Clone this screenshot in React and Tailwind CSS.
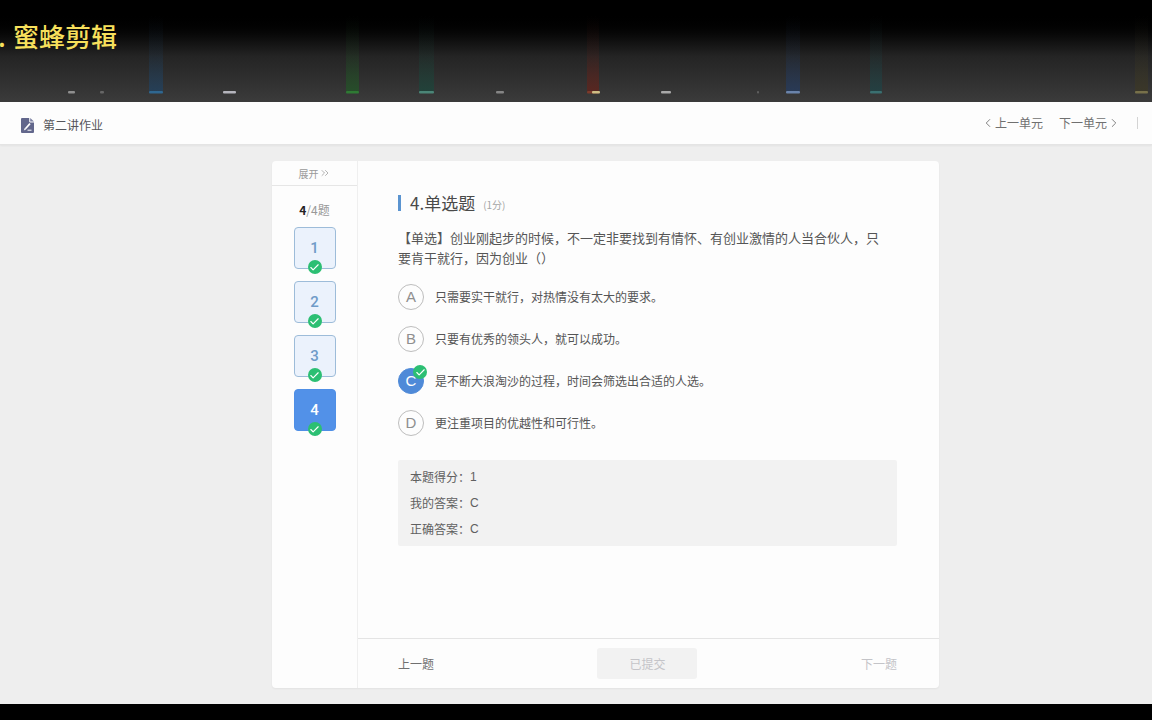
import { Check, ChevronLeft, ChevronRight, ChevronsRight } from 'lucide-react'

const questions = [1, 2, 3, 4]
const current = 4

const options = [
  { key: 'A', text: '只需要实干就行，对热情没有太大的要求。' },
  { key: 'B', text: '只要有优秀的领头人，就可以成功。' },
  { key: 'C', text: '是不断大浪淘沙的过程，时间会筛选出合适的人选。' },
  { key: 'D', text: '更注重项目的优越性和可行性。' },
]

const results = [
  { label: '本题得分：', value: '1' },
  { label: '我的答案：', value: 'C' },
  { label: '正确答案：', value: 'C' },
]

// icon edges along the bottom of the dark strip, glow is the tint above them
const marks = [
  { x: 68, w: 7, color: '#8f8f8f' },
  { x: 100, w: 4, color: '#666666' },
  { x: 149, w: 14, color: '#2f6790', glow: '#1d4468' },
  { x: 223, w: 13, color: '#b4b4bc' },
  { x: 346, w: 13, color: '#2f7a34', glow: '#1f5a24' },
  { x: 419, w: 15, color: '#4b8577', glow: '#17483c' },
  { x: 496, w: 8, color: '#858585' },
  { x: 587, w: 12, color: '#7d3a2a', glow: '#6a1f16' },
  { x: 592, w: 8, color: '#cdbd84' },
  { x: 661, w: 10, color: '#a8a8a8' },
  { x: 757, w: 2, color: '#606060' },
  { x: 786, w: 14, color: '#6a83aa', glow: '#223c66' },
  { x: 870, w: 12, color: '#3a6f70', glow: '#1b4548' },
  { x: 1135, w: 13, color: '#77704a', glow: '#3d3822' },
]

function TopStrip() {
  return (
    <div className="relative h-[102px] shrink-0 bg-linear-to-b from-black from-10% via-[#242424] via-55% to-[#3b3b3b]">
      <svg className="absolute inset-0 h-full w-full" aria-hidden="true">
        <defs>
          {marks.filter(m => m.glow).map(m => (
            <linearGradient key={m.x} id={`glow-${m.x}`} x1="0" y1="0" x2="0" y2="1">
              <stop offset="0" stopColor={m.glow} stopOpacity="0" />
              <stop offset="0.5" stopColor={m.glow} stopOpacity="0.15" />
              <stop offset="1" stopColor={m.glow} stopOpacity="0.65" />
            </linearGradient>
          ))}
        </defs>
        {marks.map(m => (
          <g key={m.x}>
            {m.glow && <rect x={m.x} y="16" width={m.w} height="75" fill={`url(#glow-${m.x})`} />}
            <rect x={m.x} y="91" width={m.w} height="2.4" rx="1" fill={m.color} />
          </g>
        ))}
      </svg>
      <p className="relative flex pt-4 text-[26px] leading-10 font-medium whitespace-nowrap text-[#f7e05c]">
        <span className="w-[13px] -indent-[2px]">.</span>
        蜜蜂剪辑
      </p>
    </div>
  )
}

function DocIcon() {
  return (
    <svg className="h-[15px] w-[13px]" viewBox="0 0 13 15" aria-hidden="true">
      <path d="M1 0h7.2v3.6q0 .8.8.8H13V14a1 1 0 0 1-1 1H1a1 1 0 0 1-1-1V1a1 1 0 0 1 1-1z" fill="#62678c" />
      <path d="M9.2 0 13 3.6H9.2z" fill="#7b80a2" />
      <path d="M9 5.6 4.4 10.8" stroke="#fff" strokeWidth="1.7" />
      <path d="M3.8 10 5.2 11.3 2.8 12.4z" fill="#fff" />
      <path d="M6.5 12.2h4" stroke="#fff" strokeWidth="1" />
    </svg>
  )
}

function Header() {
  return (
    <header className="flex h-[43px] shrink-0 items-center justify-between border-b border-[#e4e4e4] bg-[#fdfdfd] pr-[14px] pl-[21px] shadow-xs">
      <div className="flex items-center gap-[9px] pt-1">
        <DocIcon />
        <h1 className="text-[12px] leading-4 text-[#55555a]">第二讲作业</h1>
      </div>
      <nav className="flex items-center text-[12px] leading-4 text-[#707070]">
        <a href="#prev-unit" className="flex items-center">
          <ChevronLeft size={14} strokeWidth={1.5} />
          上一单元
        </a>
        <a href="#next-unit" className="ml-4 flex items-center">
          下一单元
          <ChevronRight size={14} strokeWidth={1.5} />
        </a>
        <span className="ml-4 h-3 w-px bg-[#d4d4d4]" />
      </nav>
    </header>
  )
}

function Tick({ className }) {
  return (
    <span className={`absolute flex size-[14px] items-center justify-center rounded-full bg-[#2cbf73] text-white ${className}`}>
      <Check size={11} strokeWidth={2.5} />
    </span>
  )
}

function Sidebar() {
  return (
    <aside className="flex w-[86px] shrink-0 flex-col items-center border-r border-[#efefef]">
      <button className="flex h-[25px] w-full items-center justify-center border-b border-[#e6e6e6] text-[10px] text-[#999]">
        展开
        <ChevronsRight size={12} strokeWidth={1.5} />
      </button>
      <p className="mt-4 text-[12px] leading-4 text-[#999]">
        <strong className="text-[#222]">{current}</strong>/{questions.length}题
      </p>
      <div className="mt-[9px] flex flex-col gap-3">
        {questions.map(n => (
          <button
            key={n}
            className={`relative size-[42px] rounded-[4px] border pt-px font-[Roboto,sans-serif] text-[15px] font-medium ${
              n === current
                ? 'border-[#4f8fe6] bg-[#5291e8] text-white'
                : 'border-[#9dbcd9] bg-[#ebf2fc] text-[#6f9bc8]'
            }`}
          >
            {n}
            <Tick className="-bottom-[6px] left-[13px]" />
          </button>
        ))}
      </div>
    </aside>
  )
}

function Option({ option, selected }) {
  return (
    <label className="flex items-center gap-[11px]">
      <span className="relative grid size-[26px] place-items-center">
        <input
          type="radio"
          name="answer"
          value={option.key}
          checked={selected}
          readOnly
          className="col-start-1 row-start-1 size-[26px] appearance-none rounded-full border border-[#bdbdbd] checked:border-[#4f8ad8] checked:bg-[#4f8ad8]"
        />
        <span
          className={`col-start-1 row-start-1 font-['Liberation_Sans',sans-serif] text-[15px] leading-4 ${
            selected ? 'text-white' : 'text-[#8f8f8f]'
          }`}
        >
          {option.key}
        </span>
        {selected && <Tick className="-top-[3px] -right-[3px]" />}
      </span>
      <span className="text-[12px] leading-4 text-[#555]">{option.text}</span>
    </label>
  )
}

function Question() {
  return (
    <section className="flex min-w-0 flex-1 flex-col">
      <div className="flex-1 pt-[30px] pr-[42px] pl-10">
        <h2 className="flex items-center text-[17px] leading-6 text-[#4a4a4a]">
          <span className="mr-[9px] h-4 w-[3px] bg-[#5b94d0]" />
          4.单选题
          <small className="ml-2 pt-1 text-[10px] leading-4 text-[#a5a5a5]">(1分)</small>
        </h2>
        <p className="mt-[13px] text-[13px] leading-5 text-[#555]">
          【单选】创业刚起步的时候，不一定非要找到有情怀、有创业激情的人当合伙人，只
          <br />
          要肯干就行，因为创业（）
        </p>
        <div className="mt-4 flex flex-col gap-4">
          {options.map(o => (
            <Option key={o.key} option={o} selected={o.key === 'C'} />
          ))}
        </div>
        <dl className="mt-6 rounded-xs bg-[#f2f2f2] px-3 py-1 text-[12px] leading-[26px] text-[#606060]">
          {results.map(r => (
            <div key={r.label} className="flex">
              <dt>{r.label}</dt>
              <dd className="font-['Liberation_Sans',sans-serif]">{r.value}</dd>
            </div>
          ))}
        </dl>
      </div>
      <footer className="grid grid-cols-3 items-center border-t border-[#e4e4e4] py-[9px] pr-[42px] pl-10 text-[12px] leading-4">
        <button className="justify-self-start text-[#707070]">上一题</button>
        <button disabled className="h-[31px] w-[100px] justify-self-center rounded-[3px] bg-[#f2f2f2] text-[#c4c4c8]">
          已提交
        </button>
        <button disabled className="justify-self-end text-[#c4c4c8]">下一题</button>
      </footer>
    </section>
  )
}

export default function App() {
  return (
    <div className="flex min-h-screen flex-col bg-[#eeeeee] font-['Noto_Sans_CJK_SC',sans-serif]">
      <TopStrip />
      <Header />
      <main className="flex flex-1 py-4 pl-[59px]">
        <div className="mx-auto flex w-full max-w-[667px] rounded-[4px] bg-[#fdfdfd] shadow-xs">
          <Sidebar />
          <Question />
        </div>
      </main>
      <div className="h-4 shrink-0 bg-black" />
    </div>
  )
}
